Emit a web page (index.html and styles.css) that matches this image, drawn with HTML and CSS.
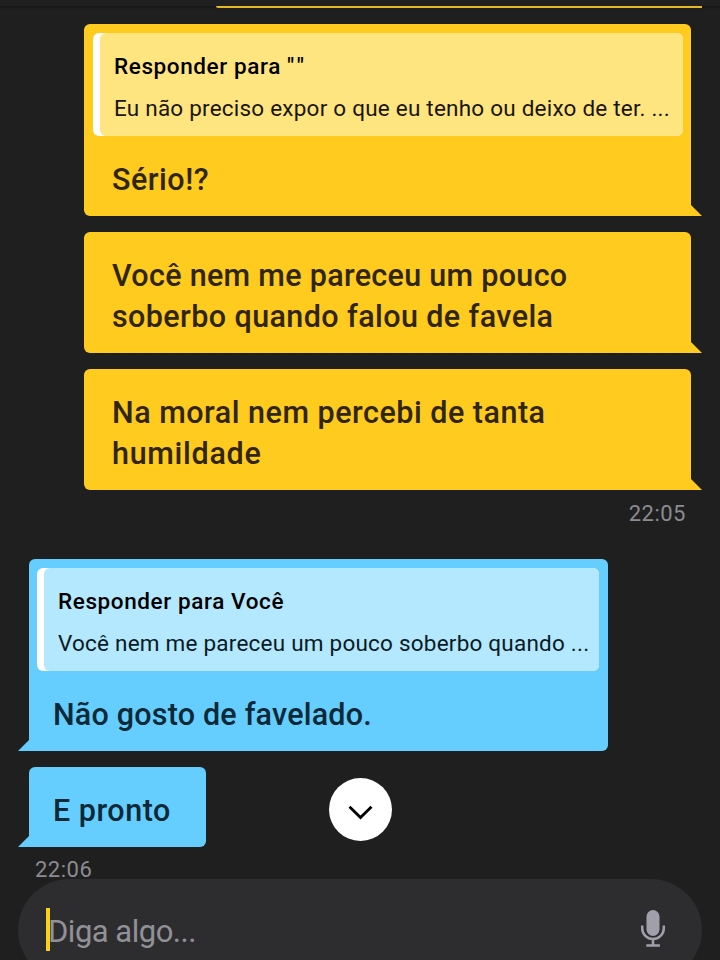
FILE: index.html
```html
<!DOCTYPE html>
<html lang="pt-BR">
<head>
<meta charset="UTF-8">
<meta name="viewport" content="width=device-width, initial-scale=1.0">
<title>Chat</title>
<link rel="stylesheet" href="styles.css">
</head>
<body>

<header class="topbar"></header>

<main class="chat">
  <div class="bubble sent cut"></div>

  <div class="bubble sent">
    <div class="quote">
      <p class="quote-title">Responder para <span class="empty-name">""</span></p>
      <p class="quote-text">Eu não preciso expor o que eu tenho ou deixo de ter. ...</p>
    </div>
    <p class="text"><span class="ls-5">Sério!?</span></p>
  </div>

  <div class="bubble sent">
    <p class="text"><span class="ls-3">Você nem me pareceu um pouco</span><br><span class="ls-4">soberbo quando falou de favela</span></p>
  </div>

  <div class="bubble sent">
    <p class="text"><span class="ls-5">Na moral nem percebi de tanta</span><br><span class="ls-7">humildade</span></p>
  </div>

  <time class="time time-sent">22:05</time>

  <div class="bubble received wide">
    <div class="quote">
      <p class="quote-title">Responder para Você</p>
      <p class="quote-text">Você nem me pareceu um pouco soberbo quando ...</p>
    </div>
    <p class="text"><span class="ls-2">Não gosto de favelado.</span></p>
  </div>

  <div class="bubble received short">
    <p class="text"><span class="ls-5">E pronto</span></p>
  </div>

  <time class="time time-received">22:06</time>
</main>

<button class="scroll-btn" type="button" aria-label="Descer">
  <svg width="63" height="63" viewBox="0 0 63 63">
    <path d="M20.5 28.8L31.5 39.6L42.5 28.8" fill="none" stroke="#000" stroke-width="2.8"/>
  </svg>
</button>

<footer class="composer">
  <span class="caret"></span>
  <span class="placeholder">Diga algo...</span>
  <svg class="mic" width="26" height="40" viewBox="0 0 26 40">
    <rect x="6.5" y="1" width="13" height="26" rx="6.5" fill="#a09faa"/>
    <path d="M2.2 16.5v2.7a10.8 10.8 0 0 0 21.6 0v-2.7M13 30v6.4M6.3 36.6h13.6" fill="none" stroke="#a09faa" stroke-width="2.5"/>
  </svg>
</footer>

</body>
</html>
```
FILE: styles.css
```css
* {
  padding: 0;
  margin: 0;
  box-sizing: border-box;
}

body {
  position: relative;
  display: flex;
  flex-direction: column;
  width: 720px;
  height: 960px;
  overflow: hidden;
  background-color: #1f1f1f;
  font-family: Roboto, "Noto Sans", sans-serif;
}

.topbar {
  height: 6px;
  flex-shrink: 0;
  background-color: #202020;
  box-shadow: 0 1px 3px rgba(0, 0, 0, 0.4);
}

.chat {
  display: flex;
  flex-direction: column;
  height: 873px;
  flex-shrink: 0;
}

.bubble {
  position: relative;
  flex-shrink: 0;
  margin-bottom: 16px;
  border-radius: 6px;
}

.bubble::after {
  content: "";
  position: absolute;
  bottom: 0;
  width: 12px;
  height: 11px;
}

.sent {
  margin-left: 84px;
  width: 607px;
  background-color: #ffcb1f;
  border-bottom-right-radius: 0;
  color: #302504;
}

.sent::after {
  right: -11px;
  background-color: #ffcb1f;
  clip-path: polygon(0 0, 1px 0, 100% 100%, 0 100%);
}

.received {
  margin-left: 29px;
  background-color: #66ceff;
  border-bottom-left-radius: 0;
  color: #0b2936;
}

.received::after {
  left: -11px;
  background-color: #66ceff;
  clip-path: polygon(100% 0, 11px 0, 0 100%, 100% 100%);
}

.wide {
  width: 579px;
}

.short {
  width: 177px;
}

/* last pixels of the message hidden under the top bar */
.cut {
  margin-left: 216px;
  width: 486px;
  height: 2px;
  border-radius: 0 0 0 3px;
  background-color: #e6b826;
}

.cut::after {
  display: none;
}

.quote {
  position: relative;
  top: 9px;
  height: 103px;
  margin: 0 8px 9px 9px;
  padding: 16px 0 0 21px;
  border-radius: 6px;
  overflow: hidden;
  background-color: #fff;
  white-space: nowrap;
  color: #1a1508;
}

.quote::before {
  content: "";
  position: absolute;
  top: 0;
  right: 0;
  bottom: 0;
  left: 7px;
  border-radius: 6px;
  background-color: #ffe580;
}

.received .quote {
  margin: 0 9px 9px 8px;
  color: #0a1a22;
}

.received .quote::before {
  background-color: #b3e8ff;
}

.quote-title,
.quote-text {
  position: relative;
  height: 42px;
  line-height: 34px;
  font-size: 22.5px;
}

.quote-title {
  font-weight: 500;
  letter-spacing: 0.6px;
  color: #000;
}

.quote-text {
  letter-spacing: 0.22px;
}

.empty-name {
  letter-spacing: 3.5px;
}

.text {
  padding: 23px 24px 16px 28px;
  line-height: 41px;
  font-size: 30.5px;
  font-weight: 500;
  white-space: nowrap;
}

.received .text {
  padding-left: 24px;
}

.ls-2 {
  letter-spacing: 0.2px;
}

.ls-3 {
  letter-spacing: 0.3px;
}

.ls-4 {
  letter-spacing: 0.4px;
}

.ls-5 {
  letter-spacing: 0.5px;
}

.ls-7 {
  letter-spacing: 0.7px;
}

.time {
  height: 30px;
  line-height: 32px;
  font-size: 22px;
  letter-spacing: 0.5px;
  color: #8c8b91;
}

.time-sent {
  align-self: flex-end;
  margin: -8px 34px 31px 0;
}

.time-received {
  margin: -9px 0 0 35px;
}

.scroll-btn {
  position: absolute;
  top: 778px;
  left: 329px;
  width: 63px;
  height: 63px;
  border: 0;
  border-radius: 50%;
  background-color: #fff;
}

.scroll-btn svg {
  display: block;
}

.composer {
  display: flex;
  flex-shrink: 0;
  align-items: center;
  height: 102px;
  margin: 0 18px;
  padding: 0 36px 2px 28px;
  border-radius: 51px;
  background-color: #2d2d2f;
}

.caret {
  width: 4px;
  height: 43px;
  background-color: #fbd017;
}

.placeholder {
  margin-left: -2px;
  padding-top: 4px;
  font-size: 31px;
  letter-spacing: -0.5px;
  color: #929198;
}

.mic {
  margin-left: auto;
}
```
